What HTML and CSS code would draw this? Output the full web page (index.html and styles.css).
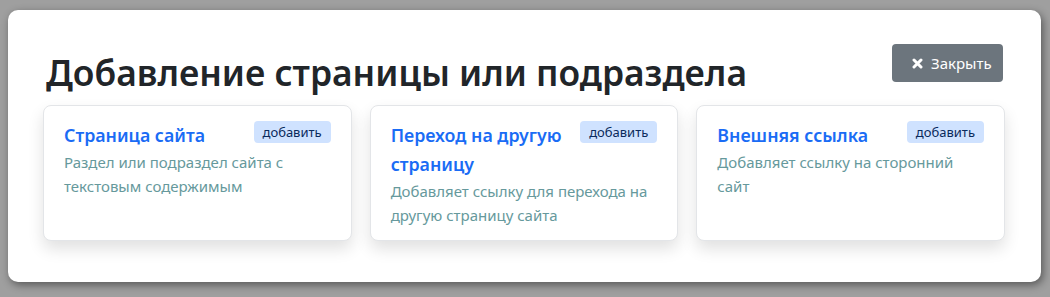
FILE: index.html
```html
<!DOCTYPE html>
<html lang="ru">

<head>
    <meta charset="UTF-8">
    <meta name="viewport" content="width=device-width, initial-scale=1.0">
    <title>Добавление страницы</title>
    <link rel="stylesheet" href="styles.css">
</head>

<body>
    <div class="modal">
        <div class="modal-header">
            <h1 class="modal-title">Добавление страницы или подраздела</h1>
            <button class="btn-close">
                <svg class="icon-times" viewBox="0 0 12 12" xmlns="http://www.w3.org/2000/svg">
                    <path d="M2.2 2.2 L9.8 9.8 M9.8 2.2 L2.2 9.8" />
                </svg>
                Закрыть
            </button>
        </div>

        <div class="cards">
            <div class="card">
                <div class="card-head">
                    <a class="card-title" href="#">Страница сайта</a>
                    <span class="badge">добавить</span>
                </div>
                <p class="card-text">Раздел или подраздел сайта с текстовым содержимым</p>
            </div>
            <div class="card">
                <div class="card-head">
                    <a class="card-title" href="#">Переход на другую страницу</a>
                    <span class="badge">добавить</span>
                </div>
                <p class="card-text">Добавляет ссылку для перехода на другую страницу сайта</p>
            </div>
            <div class="card">
                <div class="card-head">
                    <a class="card-title" href="#">Внешняя ссылка</a>
                    <span class="badge">добавить</span>
                </div>
                <p class="card-text">Добавляет ссылку на сторонний сайт</p>
            </div>
        </div>
    </div>
</body>

</html>
```

FILE: styles.css
```css
body {
    font-family: "Noto Sans", "Open Sans", sans-serif;
    margin: 0;
    padding: 10px 9px 0 8px;
    height: 297px;
    box-sizing: border-box;
    background-color: #9f9f9f;
    overflow: hidden;
}

.modal {
    height: 272px;
    box-sizing: border-box;
    background-color: #fff;
    border-radius: 10px;
    box-shadow: 2px 3px 9px rgba(0, 0, 0, 0.45);
    padding: 34px 36px 0 35px;
}

.modal-header {
    display: flex;
    justify-content: space-between;
    align-items: flex-start;
    height: 61px;
}

.modal-title {
    margin: 0;
    padding-left: 3px;
    font-size: 35.4px;
    font-weight: 600;
    line-height: 48px;
    margin-top: 4px;
    color: #212529;
}

.btn-close {
    display: flex;
    align-items: center;
    gap: 8px;
    width: 111px;
    height: 38px;
    margin-right: 2px;
    padding: 0 0 0 20px;
    border: none;
    border-radius: 4px;
    background-color: #6c757d;
    color: #fff;
    font-family: inherit;
    font-size: 15px;
    cursor: pointer;
}

.icon-times {
    width: 11px;
    height: 11px;
    stroke: #fff;
    stroke-width: 3.3;
    stroke-linecap: round;
    fill: none;
}

.cards {
    display: grid;
    grid-template-columns: repeat(3, 1fr);
    gap: 18px;
}

.card {
    min-height: 134px;
    box-sizing: border-box;
    padding: 15px 20px 13px 20px;
    border: 1px solid #e3e5e8;
    border-radius: 8px;
    box-shadow: 0 8px 16px rgba(0, 0, 0, 0.12);
    background: #fff;
}

.card-head {
    display: flex;
    justify-content: space-between;
    align-items: flex-start;
    gap: 10px;
}

.card-title {
    font-size: 17.8px;
    font-weight: 600;
    line-height: 29px;
    color: #1a6cf5;
    text-decoration: none;
}

.badge {
    flex-shrink: 0;
    height: 22px;
    line-height: 22px;
    padding: 0 9px;
    border-radius: 4px;
    background-color: #cfe2ff;
    color: #0a2a5c;
    font-size: 13px;
}

.card-text {
    margin: 0;
    font-size: 15px;
    line-height: 24px;
    color: #66999c;
}
```
